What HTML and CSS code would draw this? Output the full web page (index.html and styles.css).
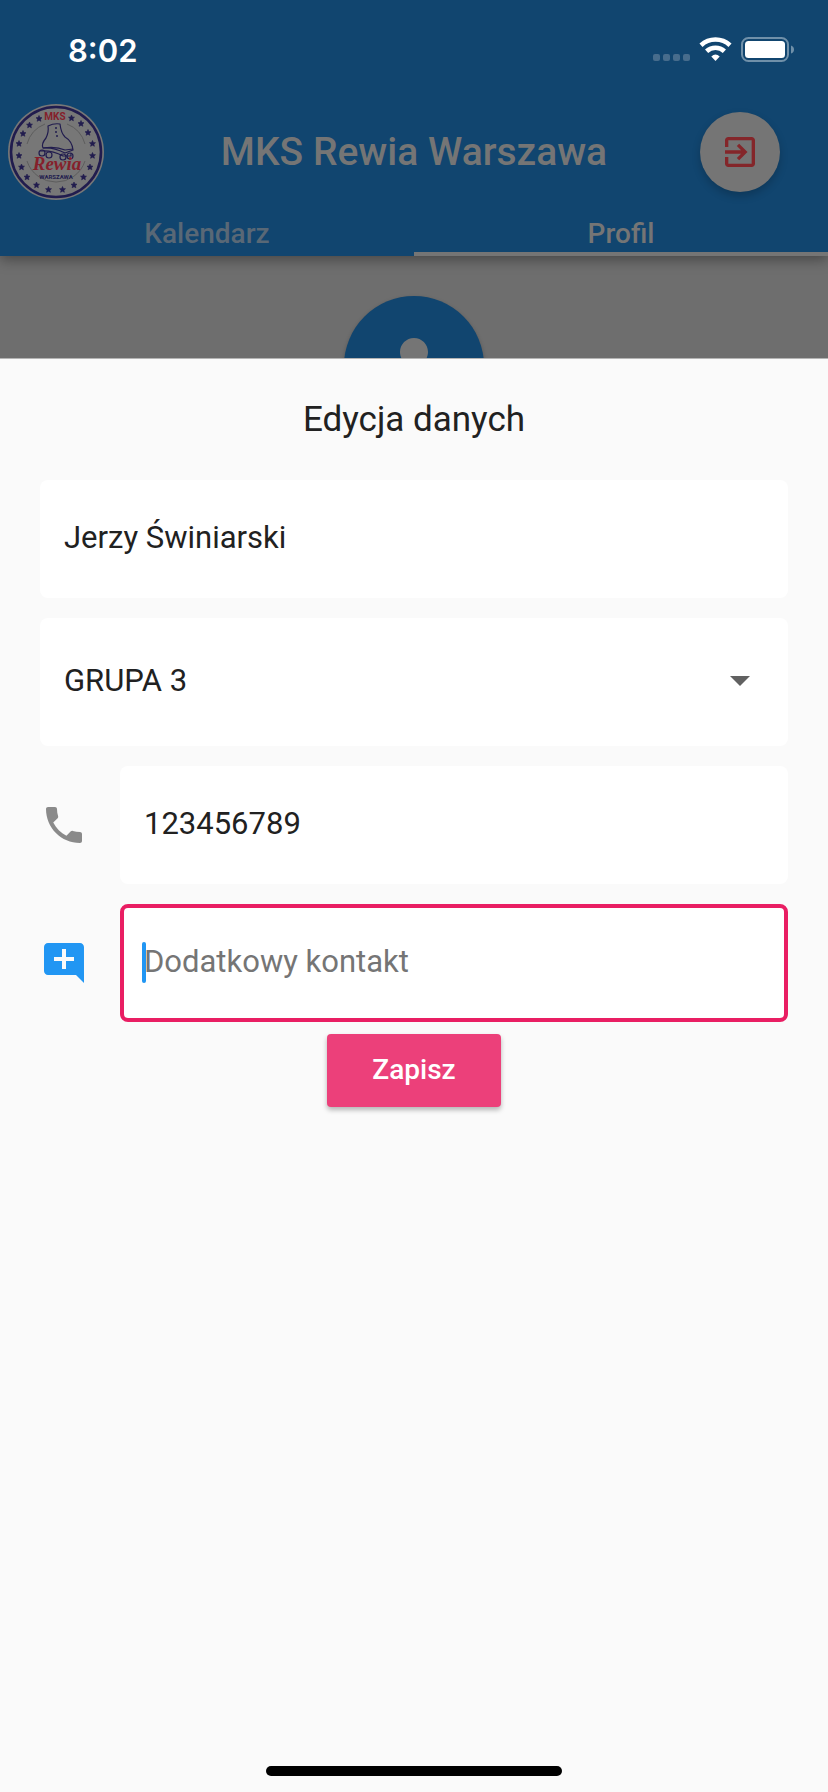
FILE: index.html
```html
<!DOCTYPE html>
<html lang="pl">
<head>
<meta charset="utf-8">
<meta name="viewport" content="width=device-width, initial-scale=1">
<title>MKS Rewia Warszawa</title>
<link rel="stylesheet" href="styles.css">
</head>
<body>
<header class="header">
  <div class="status">
    <span class="status-time">8:02</span>
    <svg class="status-icons" width="142" height="26" viewBox="0 0 142 26" aria-hidden="true">
      <g fill="#476c8c">
        <rect x="0" y="17" width="7" height="7" rx="2"/>
        <rect x="10" y="17" width="7" height="7" rx="2"/>
        <rect x="20" y="17" width="7" height="7" rx="2"/>
        <rect x="30" y="17" width="7" height="7" rx="2"/>
      </g>
      <g fill="none" stroke="#fff" stroke-width="4.6">
        <path d="M48 8.200A21.500 21.500 0 0 1 77 8.200"/>
        <path d="M53.600 14.300A13 13 0 0 1 71.400 14.300"/>
      </g>
      <path d="M62.500 24L58.300 19.600Q62.500 15.600 66.700 19.600Z" fill="#fff"/>
      <rect x="89" y="1" width="46" height="23" rx="6.500" fill="none" stroke="#7090a9" stroke-width="2"/>
      <rect x="92" y="4" width="40" height="17" rx="3.500" fill="#fff"/>
      <path d="M138 8.500Q141 9.500 141 12.500T138 16.500Z" fill="#7090a9"/>
    </svg>
  </div>
  <div class="bar">
    <svg class="logo" width="96" height="96" viewBox="0 0 96 96" role="img" aria-label="MKS Rewia Warszawa">
      <circle cx="48" cy="48" r="48" fill="#777"/>
      <circle cx="48" cy="48" r="45" fill="none" stroke="#211c4e" stroke-width="2.600"/>
      <g fill="none" stroke="#5d5d5d" stroke-width="1">
        <path d="M19 40A30 30 0 0 1 37 20M59 20A30 30 0 0 1 77 40"/>
        <path d="M19 57A30.500 30.500 0 0 0 77 57"/>
      </g>
      <defs><path id="star" fill="#211c4e" stroke="#211c4e" stroke-width=".6" d="M0-3L.9-1 3-.8 1.400.7 1.900 2.800 0 1.700-1.900 2.800-1.400.7-3-.8-.9-1Z"/></defs>
      <use href="#star" x="63.500" y="14"/><use href="#star" x="73" y="19.500"/><use href="#star" x="80" y="28.500"/>
      <use href="#star" x="84.500" y="39.500"/><use href="#star" x="84.500" y="51.500"/><use href="#star" x="82" y="63"/>
      <use href="#star" x="75.500" y="73"/><use href="#star" x="66" y="81"/><use href="#star" x="54.500" y="85.500"/>
      <use href="#star" x="40.500" y="85.500"/><use href="#star" x="28.500" y="81"/><use href="#star" x="19" y="73"/>
      <use href="#star" x="13.500" y="63"/><use href="#star" x="11" y="51.500"/><use href="#star" x="11" y="39.500"/>
      <use href="#star" x="15" y="29.500"/><use href="#star" x="21.500" y="21"/><use href="#star" x="31" y="14.500"/>
      <g fill="none" stroke="#211c4e" stroke-width="1.200" stroke-linejoin="round">
        <path d="M40 22Q46 19 52 20Q53 29 57 33Q64 37 65 46L57 49Q45 43 35 44Q33 40 38 34Q41 28 40 22Z"/>
        <path d="M35 44Q48 42 57 46L65 45M32 47Q44 46 55 52H63V49"/>
        <circle cx="34" cy="49" r="3"/><circle cx="41" cy="51" r="3"/><circle cx="55" cy="53" r="3"/><circle cx="62" cy="52" r="3"/>
      </g>
      <g fill="#211c4e"><circle cx="48" cy="24" r="1"/><circle cx="48" cy="28" r="1"/><circle cx="49" cy="32" r="1"/></g>
      <text class="logo-club" x="47" y="16" text-anchor="middle">MKS</text>
      <text class="logo-name" x="49" y="66" text-anchor="middle">Rewia</text>
      <text class="logo-city" x="48" y="75" text-anchor="middle">WARSZAWA</text>
    </svg>
    <h1 class="title">MKS Rewia Warszawa</h1>
    <button class="exit" type="button" aria-label="Wyloguj">
      <svg width="40" height="40" viewBox="0 0 24 24" fill="currentColor" aria-hidden="true"><path d="M10.090 15.590L11.500 17l5-5-5-5-1.410 1.410L12.670 11H3v2h9.670l-2.580 2.590zM19 3H5c-1.110 0-2 .9-2 2v4h2V5h14v14H5v-4H3v4c0 1.100.89 2 2 2h14c1.100 0 2-.9 2-2V5c0-1.100-.9-2-2-2z"/></svg>
    </button>
  </div>
  <nav class="tabs">
    <a class="tab" href="#kalendarz">Kalendarz</a>
    <a class="tab tab-active" href="#profil" aria-current="page">Profil</a>
  </nav>
</header>
<section class="profile" aria-label="Profil">
  <div class="avatar">
    <svg width="84" height="84" viewBox="0 0 24 24" fill="currentColor" aria-hidden="true"><path d="M12 12c2.210 0 4-1.790 4-4s-1.790-4-4-4-4 1.790-4 4 1.790 4 4 4zm0 2c-2.670 0-8 1.340-8 4v2h16v-2c0-2.660-5.330-4-8-4z"/></svg>
  </div>
</section>
<main class="sheet">
  <h2 class="sheet-title">Edycja danych</h2>
  <form class="form">
    <input class="field" type="text" value="Jerzy Świniarski" aria-label="Imię i nazwisko">
    <div class="select">
      <select class="field field-select" aria-label="Grupa">
        <option>GRUPA 3</option>
      </select>
      <svg class="select-arrow" width="48" height="48" viewBox="0 0 24 24" aria-hidden="true"><path d="M7 10l5 5 5-5z" fill="#616161"/></svg>
    </div>
    <div class="row">
      <svg class="icon-phone" width="48" height="48" viewBox="0 0 24 24" fill="currentColor" aria-hidden="true"><path d="M6.620 10.790c1.440 2.830 3.760 5.140 6.590 6.590l2.200-2.200c.27-.27.67-.36 1.020-.24 1.120.37 2.330.57 3.570.57.55 0 1 .45 1 1V20c0 .55-.45 1-1 1-9.390 0-17-7.610-17-17 0-.55.45-1 1-1h3.500c.55 0 1 .45 1 1 0 1.250.2 2.450.57 3.570.11.35.03.74-.25 1.020l-2.200 2.200z"/></svg>
      <input class="field" type="tel" value="123456789" aria-label="Telefon">
    </div>
    <div class="row">
      <svg class="icon-comment" width="48" height="48" viewBox="0 0 24 24" fill="currentColor" aria-hidden="true"><path d="M21.990 4c0-1.100-.89-2-1.990-2H4c-1.100 0-2 .9-2 2v12c0 1.100.9 2 2 2h14l4 4-.01-18zM17 11h-4v4h-2v-4H7V9h4V5h2v4h4v2z"/></svg>
      <div class="contact">
        <input class="field field-focused" type="text" placeholder="Dodatkowy kontakt" aria-label="Dodatkowy kontakt">
        <span class="caret"></span>
      </div>
    </div>
    <button class="save" type="submit">Zapisz</button>
  </form>
  <div class="home-indicator"></div>
</main>
</body>
</html>
```
FILE: styles.css
```css
* { box-sizing: border-box; }

body {
  margin: 0;
  min-height: 100vh;
  display: flex;
  flex-direction: column;
  background: #6e6e6e;
  color: #212121;
  font-family: Roboto, "Liberation Sans", sans-serif;
}

h1, h2 { margin: 0; }
svg { display: block; flex: none; }
button, input, select { font: inherit; }

.header {
  position: relative;
  z-index: 1;
  background: #11456f;
  box-shadow: 0 4px 12px rgba(0, 0, 0, 0.35);
}

.status {
  height: 88px;
  padding: 12px 33px 0 68px;
  display: flex;
  align-items: center;
  justify-content: space-between;
}

.status-time {
  color: #fff;
  font-family: Inter, sans-serif;
  font-size: 31px;
  font-weight: 600;
}

.bar {
  height: 128px;
  padding: 0 48px 0 8px;
  display: grid;
  grid-template-columns: 136px 1fr 96px;
  align-items: center;
}

.title {
  color: #757575;
  font-size: 39px;
  font-weight: 500;
  text-align: center;
}

.logo-club { fill: #851f2b; font: bold 10px Roboto, sans-serif; }
.logo-name { fill: #851f2b; font: italic bold 19px "Liberation Serif", serif; }
.logo-city { fill: #211c4e; font: bold 6px Roboto, sans-serif; }

.exit {
  width: 80px;
  height: 80px;
  padding: 0;
  border: 0;
  border-radius: 50%;
  display: grid;
  place-items: center;
  justify-self: end;
  background: #757575;
  color: #84262a;
  box-shadow: 0 4px 8px rgba(0, 0, 0, 0.2);
}

.tabs { display: flex; }

.tab {
  flex: 1;
  height: 40px;
  border-bottom: 4px solid transparent;
  color: #596876;
  font-size: 28px;
  font-weight: 500;
  line-height: 36px;
  text-align: center;
  text-decoration: none;
}

.tab-active {
  color: #757575;
  border-bottom-color: #757575;
}

.profile {
  height: 102px;
  padding-top: 40px;
  overflow: hidden;
  display: flex;
  justify-content: center;
}

.avatar {
  flex: none;
  width: 140px;
  height: 140px;
  border-radius: 50%;
  display: grid;
  place-items: center;
  background: #11456f;
  color: #757575;
  box-shadow: 0 2px 4px rgba(0, 0, 0, 0.25);
}

.sheet {
  flex: 1;
  padding: 0 40px 16px;
  border-top: 1px solid #b4b4b4;
  background: #fafafa;
  display: flex;
  flex-direction: column;
}

.sheet-title {
  padding: 37px 0 36px;
  font-size: 35px;
  font-weight: 400;
  line-height: 48px;
  text-align: center;
}

.form {
  display: flex;
  flex-direction: column;
  gap: 20px;
}

.field {
  display: block;
  width: 100%;
  min-width: 0;
  height: 118px;
  padding: 0 24px 4px;
  border: 0;
  border-radius: 8px;
  outline: 0;
  background: #fff;
  color: #212121;
  font-size: 31px;
}

.select { position: relative; }

.field-select {
  height: 128px;
  appearance: none;
}

.select-arrow {
  position: absolute;
  top: 38px;
  right: 24px;
  pointer-events: none;
}

.row {
  display: flex;
  align-items: center;
  gap: 32px;
}

.icon-phone { color: #8a8a8a; }
.icon-comment { color: #2196f3; }

.contact {
  position: relative;
  flex: 1;
}

.field-focused {
  padding: 0 20px 4px;
  border: 4px solid #e91e63;
}

.field-focused::placeholder {
  color: #757575;
  opacity: 1;
}

.caret {
  position: absolute;
  top: 38px;
  left: 22px;
  width: 4px;
  height: 41px;
  border-radius: 2px;
  background: #2196f3;
}

.save {
  align-self: center;
  width: 174px;
  height: 73px;
  margin-top: -8px;
  padding: 0 0 2px;
  border: 0;
  border-radius: 4px;
  background: #ec407a;
  color: #fff;
  font-size: 28px;
  font-weight: 500;
  box-shadow: 0 3px 5px rgba(0, 0, 0, 0.28);
}

.home-indicator {
  width: 296px;
  height: 10px;
  margin: auto auto 0;
  border-radius: 5px;
  background: #000;
}
```
